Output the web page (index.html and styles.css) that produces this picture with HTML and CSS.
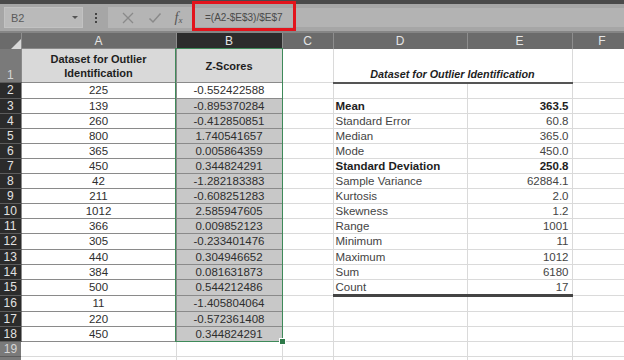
FILE: index.html
```html
<!DOCTYPE html>
<html lang="en">
<head>
  <meta charset="UTF-8">
  <title>Z-Scores</title>
  <link rel="stylesheet" href="styles.css">
</head>
<body>
  <div class="topstrip"></div>
  <div class="fbar">
    <div class="namebox"><span>B2</span><span class="caret"></span></div>
    <div class="dots"><i></i><i></i><i></i></div>
    <div class="btnbox">
      <svg class="ico" width="14" height="14" viewBox="0 0 14 14"><path d="M2 2 L12 12 M12 2 L2 12" stroke="#8a8a8a" stroke-width="1.3" fill="none"/></svg>
      <svg class="ico" width="14" height="14" viewBox="0 0 14 14"><path d="M1.5 7.5 L5 11 L12.5 2.5" stroke="#8a8a8a" stroke-width="1.5" fill="none"/></svg>
      <span class="fx">f<sub>x</sub></span>
    </div>
    <div class="formula">=(A2-$E$3)/$E$7</div>
    <div class="callout"></div>
  </div>

  <div class="sheet">
    <table class="grid">
      <colgroup>
        <col class="c-rh"><col class="c-a"><col class="c-b"><col class="c-c"><col class="c-d"><col class="c-e"><col class="c-f">
      </colgroup>
      <tr class="colheads">
        <th class="corner"><svg width="10" height="10" viewBox="0 0 10 10"><path d="M10 0 L10 10 L0 10 Z" fill="#d8d8d8"/></svg></th>
        <th>A</th><th class="sel">B</th><th>C</th><th>D</th><th>E</th><th>F</th>
      </tr>
      <tr class="r1">
        <td class="rh off">1</td>
        <td class="hd">Dataset for Outlier<br>Identification</td>
        <td class="hd">Z-Scores</td>
        <td></td>
        <td colspan="2" class="title">Dataset for Outlier Identification</td>
        <td></td>
      </tr>
      <tr><td class="rh">2</td><td class="a">225</td><td class="b act">-0.552422588</td><td></td><td class="d"></td><td class="e"></td><td></td></tr>
      <tr><td class="rh">3</td><td class="a">139</td><td class="b">-0.895370284</td><td></td><td class="d strong">Mean</td><td class="e strong">363.5</td><td></td></tr>
      <tr><td class="rh">4</td><td class="a">260</td><td class="b">-0.412850851</td><td></td><td class="d">Standard Error</td><td class="e">60.8</td><td></td></tr>
      <tr><td class="rh">5</td><td class="a">800</td><td class="b">1.740541657</td><td></td><td class="d">Median</td><td class="e">365.0</td><td></td></tr>
      <tr><td class="rh">6</td><td class="a">365</td><td class="b">0.005864359</td><td></td><td class="d">Mode</td><td class="e">450.0</td><td></td></tr>
      <tr><td class="rh">7</td><td class="a">450</td><td class="b">0.344824291</td><td></td><td class="d strong">Standard Deviation</td><td class="e strong">250.8</td><td></td></tr>
      <tr><td class="rh">8</td><td class="a">42</td><td class="b">-1.282183383</td><td></td><td class="d">Sample Variance</td><td class="e">62884.1</td><td></td></tr>
      <tr><td class="rh">9</td><td class="a">211</td><td class="b">-0.608251283</td><td></td><td class="d">Kurtosis</td><td class="e">2.0</td><td></td></tr>
      <tr><td class="rh">10</td><td class="a">1012</td><td class="b">2.585947605</td><td></td><td class="d">Skewness</td><td class="e">1.2</td><td></td></tr>
      <tr><td class="rh">11</td><td class="a">366</td><td class="b">0.009852123</td><td></td><td class="d">Range</td><td class="e">1001</td><td></td></tr>
      <tr><td class="rh">12</td><td class="a">305</td><td class="b">-0.233401476</td><td></td><td class="d">Minimum</td><td class="e">11</td><td></td></tr>
      <tr><td class="rh">13</td><td class="a">440</td><td class="b">0.304946652</td><td></td><td class="d">Maximum</td><td class="e">1012</td><td></td></tr>
      <tr><td class="rh">14</td><td class="a">384</td><td class="b">0.081631873</td><td></td><td class="d">Sum</td><td class="e">6180</td><td></td></tr>
      <tr><td class="rh">15</td><td class="a">500</td><td class="b">0.544212486</td><td></td><td class="d last">Count</td><td class="e last">17</td><td></td></tr>
      <tr><td class="rh">16</td><td class="a">11</td><td class="b">-1.405804064</td><td></td><td></td><td></td><td></td></tr>
      <tr><td class="rh">17</td><td class="a">220</td><td class="b">-0.572361408</td><td></td><td></td><td></td><td></td></tr>
      <tr><td class="rh">18</td><td class="a">450</td><td class="b">0.344824291</td><td></td><td></td><td></td><td></td></tr>
      <tr><td class="rh off">19</td><td></td><td></td><td></td><td></td><td></td><td></td></tr>
      <tr><td class="rh off"></td><td></td><td></td><td></td><td></td><td></td><td></td></tr>
    </table>
    <div class="selection"><span class="handle"></span></div>
  </div>
</body>
</html>
```

FILE: styles.css
```css
body { margin: 0; background: #fff; font-family: "Liberation Sans", Arial, sans-serif; overflow: hidden; width: 624px; height: 360px; }

/* formula bar */
.topstrip { height: 4px; background: #4a4a4a; }
.fbar { position: relative; height: 27px; background: #a6a6a6; border-bottom: 2px solid #858585; display: flex; align-items: center; padding-left: 4px; }
.namebox { width: 79px; height: 21px; box-sizing: border-box; background: #bababa; border: 1px solid #c2c2c2; display: flex; align-items: center; justify-content: space-between; padding: 0 4px 0 6px; color: #5a5a5a; font-size: 11px; }
.caret { width: 0; height: 0; border-left: 3px solid transparent; border-right: 3px solid transparent; border-top: 3px solid #555; }
.dots { width: 25px; display: flex; flex-direction: column; align-items: center; gap: 2px; }
.dots i { width: 2px; height: 2px; background: #444; }
.btnbox { width: 85px; height: 21px; background: #b5b5b5; display: flex; align-items: center; justify-content: space-around; padding: 0 4px 0 6px; box-sizing: border-box; }
.fx { font-family: "Liberation Serif", serif; font-style: italic; font-size: 14px; color: #555; }
.fx sub { font-size: 9px; vertical-align: -1px; }
.formula { flex: 1; height: 19px; background: #b3b3b3; margin-left: 1px; display: flex; align-items: center; padding-left: 11px; font-size: 10px; color: #4a4a4a; }
.callout { position: absolute; left: 192px; top: -3px; width: 104px; height: 30px; box-sizing: border-box; border: 3px solid #e3141c; }

/* sheet */
.sheet { position: relative; }
.grid { border-collapse: collapse; table-layout: fixed; width: 632px; font-size: 11.5px; color: #2e2e2e; }
.c-rh { width: 21px; } .c-a { width: 155px; } .c-b { width: 106px; } .c-c { width: 51px; }
.c-d { width: 134px; } .c-e { width: 105px; } .c-f { width: 60px; }
.grid td, .grid th { padding: 0; white-space: nowrap; overflow: hidden; }
.grid td { border-right: 1px solid #dadada; border-bottom: 1px solid #dadada; height: 14.1px; line-height: 14px; }

.colheads th { height: 15px; background: #6b6b6b; color: #e4e4e4; font-weight: normal; font-size: 12px; border-right: 1px solid #8e8e8e; }
.colheads th.sel { background: #2c2c2c; }
.colheads th.corner { text-align: right; vertical-align: bottom; line-height: 0; }

.rh { background: #2b2b2b; color: #e2e2e2; text-align: center; font-size: 12px; border-bottom: 1px solid #5c5c5c !important; border-right: none !important; }
.rh.off { background: #7a7a7a; color: #d6d6d6; }
.r1 td { height: 33px; }
.r1 .rh { vertical-align: bottom; line-height: 13px; }

.grid td.hd { background: #d9d9d9; font-weight: bold; text-align: center; font-size: 11px; line-height: 14px; color: #1e1e1e; border: 1px solid #8a8a8a; }
.grid td.a { text-align: center; border: 1px solid #8a8a8a; }
.grid td.b { text-align: center; background: #c8c8c8; border: 1px solid #8a8a8a; }
.grid td.b.act { background: #fff; }

.grid td.title { font-weight: bold; font-style: italic; font-size: 10.8px; text-align: center; vertical-align: bottom; line-height: 16px; color: #1e1e1e; border-bottom: 2px solid #555; }
.grid td.d { padding-left: 2px; color: #444; }
.grid td.e { text-align: right; padding-right: 3px; color: #444; }
.grid td.strong { font-weight: bold; color: #1e1e1e; }
.grid td.last { border-bottom: 3px solid #444; }

.selection { position: absolute; left: 175px; top: 15px; width: 106px; height: 292px; border: 1px solid #3f8a5a; pointer-events: none; }
.handle { position: absolute; right: -4px; bottom: -4px; width: 5px; height: 5px; background: #2f7a4a; border: 1px solid #fff; }
```
